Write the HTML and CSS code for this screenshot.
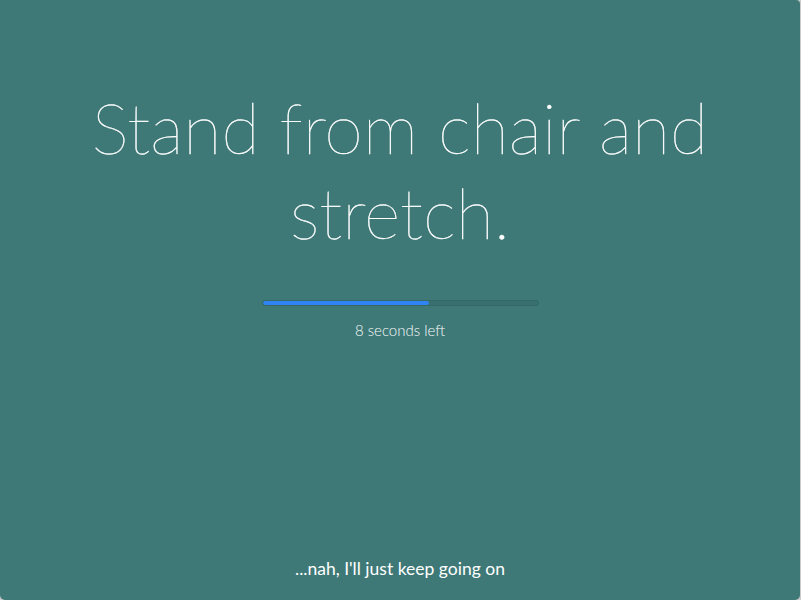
FILE: index.html
```html
<!DOCTYPE html>
<html>
<head>
<meta charset="utf-8">
<link rel="stylesheet" href="styles.css">
</head>
<body>
<div class="window">
  <div class="main">
    <h1 class="title">Stand from chair and stretch.</h1>
    <div class="progress"><div class="fill" style="width:60.5%"></div></div>
    <div class="left">8 seconds left</div>
  </div>
  <div class="skip">...nah, I'll just keep going on</div>
</div>
</body>
</html>
```
FILE: styles.css
```css
html, body {
  margin: 0;
  padding: 0;
}
body {
  width: 801px;
  height: 600px;
  background: #c9cccc;
  overflow: hidden;
  font-family: Lato, "Open Sans", sans-serif;
}
.window {
  width: 800px;
  height: 600px;
  background: #3e7977;
  border-radius: 0 4px 5px 5px;
  display: flex;
  flex-direction: column;
  align-items: center;
  color: #fff;
}
.main {
  display: flex;
  flex-direction: column;
  align-items: center;
  flex: 1;
}
.title {
  margin: 85px 0 0;
  width: 720px;
  text-align: center;
  font-weight: 100;
  font-size: 70px;
  line-height: 85px;
  -webkit-text-stroke: 0.4px #fff;
}
.progress {
  margin-top: 45px;
  width: 275px;
  height: 4px;
  border: 1px solid #356866;
  background: #37706e;
  border-radius: 3px;
  overflow: hidden;
}
.fill {
  height: 100%;
  background: #2f83f2;
  border-radius: 3px;
}
.left {
  margin-top: 15px;
  font-size: 15px;
  font-weight: 300;
  color: #f7fafa;
}
.skip {
  font-size: 17.5px;
  margin-bottom: 21px;
  color: #fff;
}
```
